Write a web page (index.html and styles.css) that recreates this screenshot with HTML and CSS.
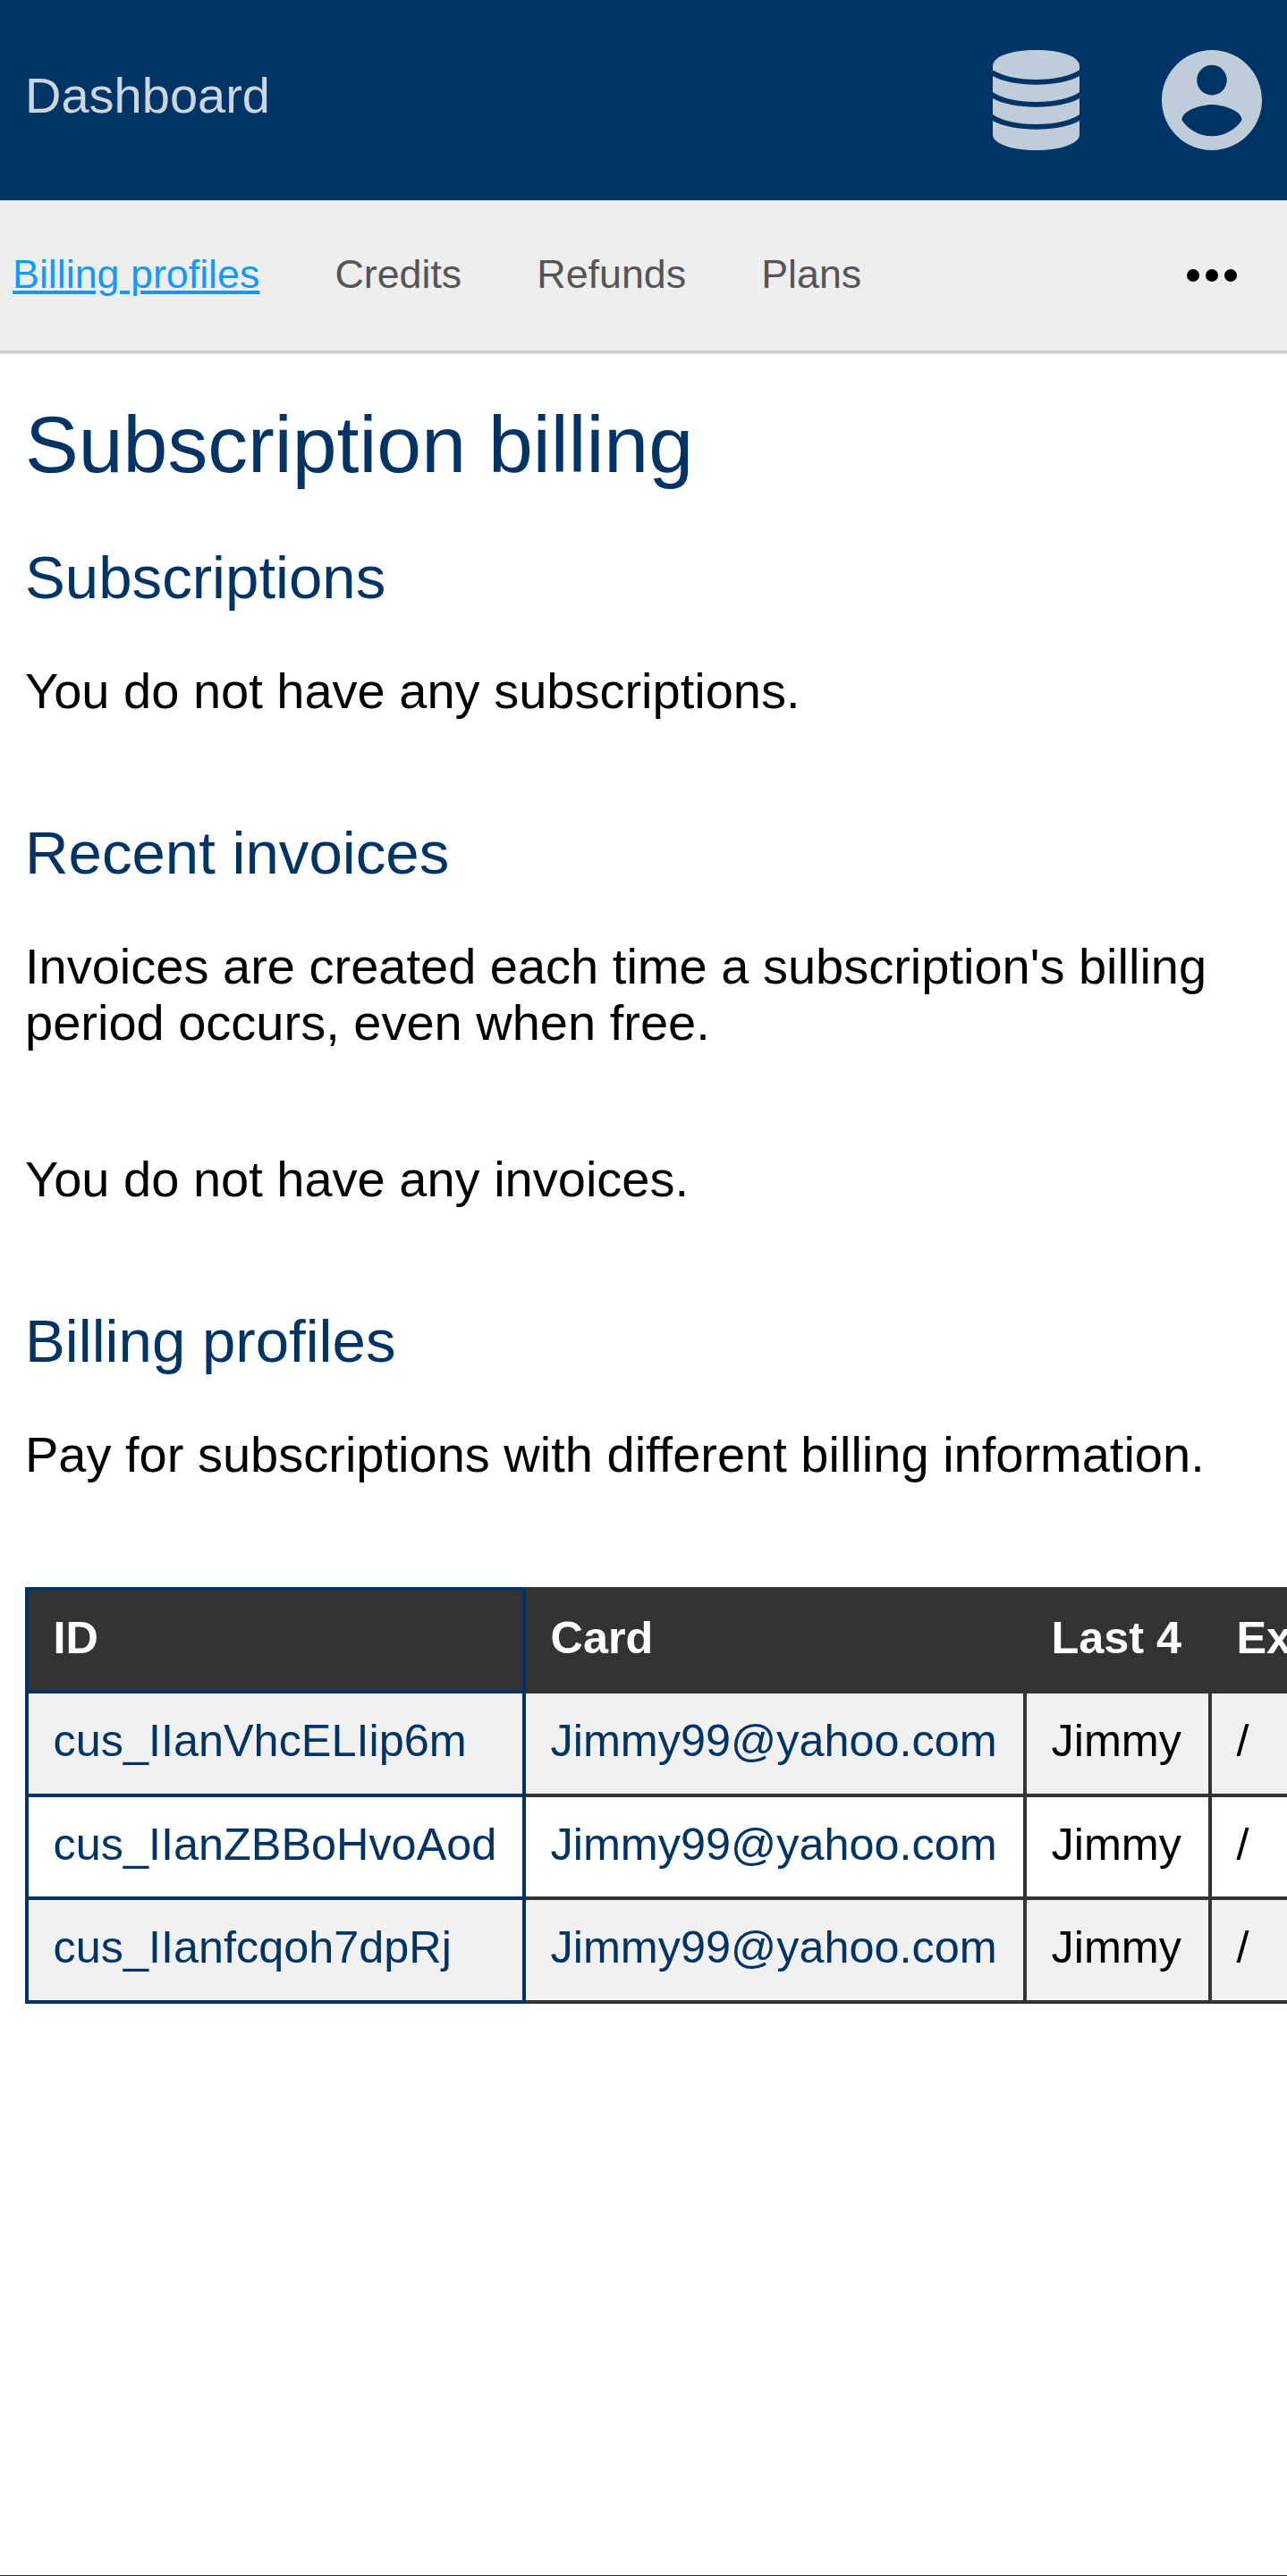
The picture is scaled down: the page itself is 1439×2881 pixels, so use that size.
FILE: index.html
```html
<!DOCTYPE html>
<html lang="en">
<head>
<meta charset="utf-8">
<title>Subscription billing</title>
<link rel="stylesheet" href="styles.css">
</head>
<body>
<header class="header">
  <a class="brand">Dashboard</a>
  <div class="menus">
    <svg class="icon-database" viewBox="0 0 291 336" preserveAspectRatio="none">
      <path d="M0 54C0 22 58 0 145.500 0S291 22 291 54V67C262 86 210 99 145.500 99S29 86 0 67Z"/>
      <path d="M0 87C33 106 88 116 145.500 116S258 106 291 87V141C262 161 210 174 145.500 174S29 161 0 141Z"/>
      <path d="M0 162C33 181 88 191 145.500 191S258 181 291 162V216C262 236 210 249 145.500 249S29 236 0 216Z"/>
      <path d="M0 237C33 256 88 266 145.500 266S258 256 291 237V284C291 313 228 336 145.500 336S0 313 0 284Z"/>
    </svg>
    <svg class="icon-account" viewBox="2 2 20 20">
      <path d="M12 2C6.480 2 2 6.480 2 12s4.480 10 10 10 10-4.480 10-10S17.520 2 12 2zm0 3c1.660 0 3 1.340 3 3s-1.340 3-3 3-3-1.340-3-3 1.340-3 3-3zm0 14.200c-2.500 0-4.710-1.280-6-3.220.030-1.990 4-3.080 6-3.080 1.990 0 5.970 1.090 6 3.080-1.290 1.940-3.500 3.220-6 3.220z"/>
    </svg>
  </div>
</header>
<nav class="navbar">
  <a class="nav-link active">Billing profiles</a>
  <a class="nav-link">Credits</a>
  <a class="nav-link">Refunds</a>
  <a class="nav-link">Plans</a>
  <svg class="icon-more" viewBox="0 0 56 14">
    <circle cx="7" cy="7" r="7"/><circle cx="28" cy="7" r="7"/><circle cx="49" cy="7" r="7"/>
  </svg>
</nav>
<main class="content">
  <h1>Subscription billing</h1>
  <section>
    <h2>Subscriptions</h2>
    <p>You do not have any subscriptions.</p>
  </section>
  <section>
    <h2>Recent invoices</h2>
    <p>Invoices are created each time a subscription's billing period occurs, even when free.</p>
    <p class="empty">You do not have any invoices.</p>
  </section>
  <section>
    <h2>Billing profiles</h2>
    <p>Pay for subscriptions with different billing information.</p>
    <div class="table-wrap">
      <table class="profiles">
        <colgroup><col class="col-id"><col class="col-card"><col class="col-last"><col class="col-exp"></colgroup>
        <thead>
          <tr><th>ID</th><th>Card</th><th>Last 4</th><th>Expires</th></tr>
        </thead>
        <tbody>
          <tr><td><a>cus_IIanVhcELIip6m</a></td><td><a>Jimmy99@yahoo.com</a></td><td>Jimmy</td><td>/</td></tr>
          <tr><td><a>cus_IIanZBBoHvoAod</a></td><td><a>Jimmy99@yahoo.com</a></td><td>Jimmy</td><td>/</td></tr>
          <tr><td><a>cus_IIanfcqoh7dpRj</a></td><td><a>Jimmy99@yahoo.com</a></td><td>Jimmy</td><td>/</td></tr>
        </tbody>
      </table>
    </div>
  </section>
</main>
</body>
</html>
```
FILE: styles.css
```css
* { box-sizing: border-box; }
body {
  margin: 0;
  display: flex;
  flex-direction: column;
  height: 2881px;
  overflow: hidden;
  border-bottom: 1px solid #003366;
  background: #fff;
  color: #000;
  font: 56px/63px "Liberation Sans", Arial, sans-serif;
}
.header {
  flex: none;
  display: flex;
  justify-content: space-between;
  height: 224px;
  padding: 0 28px;
  background: #003366;
}
.brand { padding-top: 75px; color: #ccd6e0; }
.menus { display: flex; align-items: center; gap: 92px; fill: #bfccd9; }
.icon-database { width: 97px; height: 112px; }
.icon-account { width: 112px; height: 112px; }
.navbar {
  flex: none;
  display: flex;
  align-items: center;
  gap: 84px;
  height: 171px;
  padding: 0 56px 0 14px;
  border-bottom: 3px solid #ccc;
  box-shadow: 0 1px 0 #e5e5e5;
  background: #eee;
  font-size: 44.8px;
  line-height: 52px;
}
.nav-link { padding-bottom: 4px; color: #555; }
.nav-link.active {
  color: #1199ff;
  text-decoration: underline;
  text-decoration-thickness: 4px;
  text-underline-offset: 3px;
}
.icon-more { width: 56px; height: 14px; margin-left: auto; }
.content { padding: 51px 0 0 28px; }
h1, h2 { margin: 0; color: #003366; font-weight: normal; }
h1 { font-size: 89.6px; line-height: 103px; margin-bottom: 58px; }
h2 { font-size: 67.2px; line-height: 77px; margin-bottom: 57px; }
p { margin: 0 28px 0 0; }
.empty { margin-top: 112px; }
section + section { margin-top: 111px; }
.table-wrap { margin-top: 117px; overflow: hidden; }
.profiles {
  width: 1600px;
  table-layout: fixed;
  border-collapse: collapse;
  font-size: 50.4px;
  line-height: 56px;
}
.col-id { width: 556px; }
.col-card { width: 560px; }
.col-last { width: 207px; }
th, td {
  height: 116px;
  padding: 25px 27.5px;
  border: 4px solid #333;
  text-align: left;
  vertical-align: top;
  white-space: nowrap;
}
th { height: 115px; background: #333; color: #fff; }
tr:nth-child(2) td { height: 115px; }
tbody tr:nth-child(odd) { background: #f1f1f1; }
th:first-child, td:first-child { border-color: #003366; }
td a { color: #003366; }
```
